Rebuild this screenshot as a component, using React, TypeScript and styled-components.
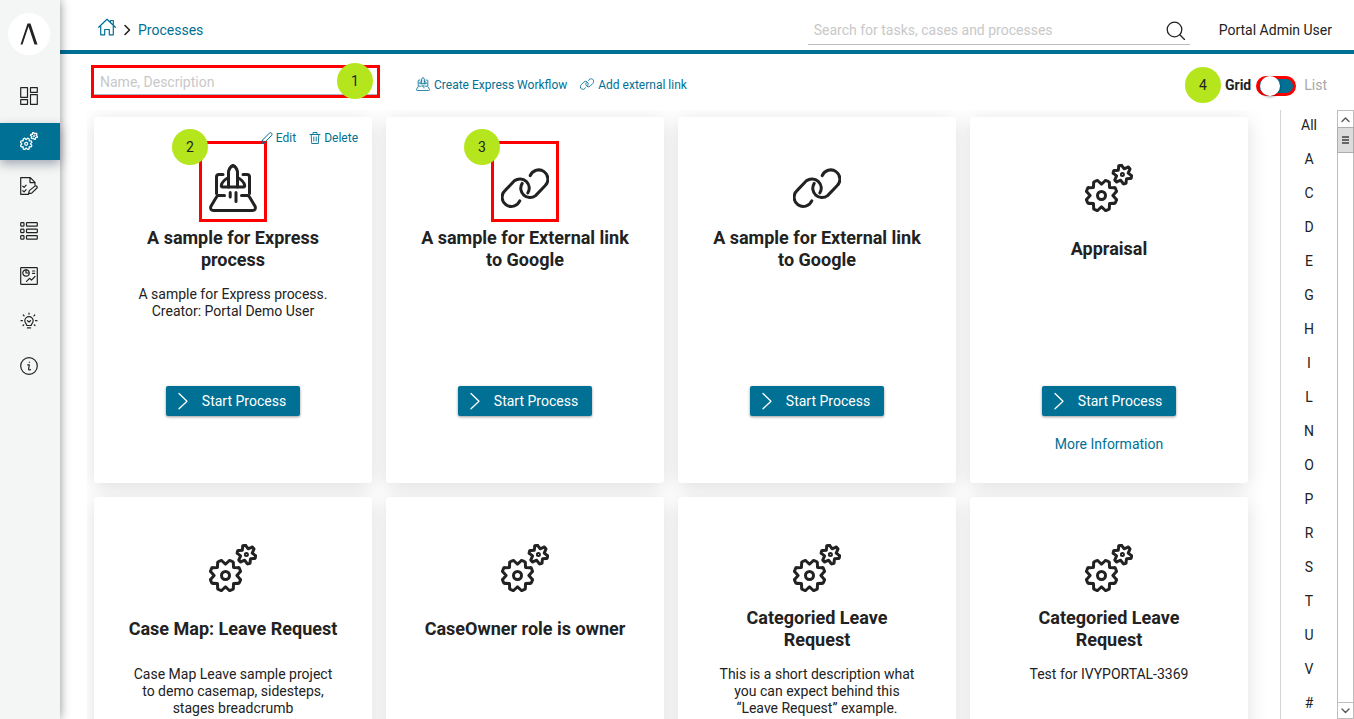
import React from "react";
import styled, { createGlobalStyle, css } from "styled-components";

const teal = "#007095";
const ink = "#222222";

const GlobalStyle = createGlobalStyle`
  *, *::before, *::after { box-sizing: border-box; }
  body { margin: 0; overflow: hidden; background: #fff; color: ${ink}; font: 14px/17px Roboto, "Liberation Sans", sans-serif; }
  button, input { font: inherit; color: inherit; }
  a { color: ${teal}; text-decoration: none; }
  svg { display: block; flex: none; }
`;

/* ---------- icons ---------- */

const Svg = styled.svg<{ $size: number; $stroke: number }>`
  width: ${(p) => p.$size}px;
  height: ${(p) => p.$size}px;
  fill: none;
  stroke: currentColor;
  stroke-width: ${(p) => p.$stroke};
  stroke-linecap: round;
  stroke-linejoin: round;
`;

type IconProps = { size: number; stroke: number };

const gearPath = (
  cx: number,
  cy: number,
  teeth: number,
  tip: number,
  valley: number,
  half: number,
  start: number
) => {
  const at = (r: number, deg: number) => {
    const a = (deg * Math.PI) / 180;
    return `${(cx + r * Math.cos(a)).toFixed(2)} ${(cy + r * Math.sin(a)).toFixed(2)}`;
  };
  const step = 360 / teeth;
  const parts: string[] = [];
  for (let i = 0; i < teeth; i++) {
    const c = start + i * step;
    parts.push(
      `${i ? "L" : "M"}${at(tip - 1, c - half - 2)}Q${at(tip + 0.4, c - half)} ${at(tip, c - half / 3)}`,
      `L${at(tip, c + half / 3)}Q${at(tip + 0.4, c + half)} ${at(tip - 1, c + half + 2)}`,
      `L${at(valley, c + step / 2)}`
    );
  }
  return parts.join("") + "Z";
};

const bigGear = gearPath(16.5, 31.5, 8, 15.6, 11.4, 8, 22.5);
const smallGear = gearPath(37.4, 10.5, 6, 9.4, 6, 10, -104);

const GearsIcon = ({ size, stroke }: IconProps) => (
  <Svg viewBox="0 0 48 48" $size={size} $stroke={stroke} aria-hidden>
    <path d={bigGear} />
    <circle cx="16.5" cy="31.5" r="4" />
    <path d={smallGear} />
    <circle cx="37.4" cy="10.5" r="1" />
  </Svg>
);

const ExpressIcon = ({ size, stroke }: IconProps) => (
  <Svg viewBox="0 0 48 48" $size={size} $stroke={stroke} aria-hidden>
    <path d="M19.5 23V7.5Q20.5 3 24 1.5Q27.5 3 28.5 7.5V23" />
    <path d="M19.5 13.5Q13 17 12.3 21.5Q12.2 23 13.5 23H34.5Q35.8 23 35.7 21.5Q35 17 28.5 13.5" />
    <path d="M14 10.5H10Q7.5 10.5 7.5 13V29.5M34 10.5H38Q40.5 10.5 40.5 13V29.5" />
    <path d="M15.5 31.5H9.5Q8.3 31.5 7.5 33L1.8 42.5Q1 46.5 4.5 46.5H43.5Q47 46.5 46.2 42.5L40.5 33Q39.7 31.5 38.5 31.5H32.5" />
    <path d="M21.2 28.5V33M27 28.5V37.5" />
  </Svg>
);

const LinkIcon = ({ size, stroke }: IconProps) => (
  <Svg viewBox="0 0 48 48" $size={size} $stroke={stroke} aria-hidden>
    <path d="M18.8 36.8A9.2 9.2 0 1 1 4.2 26.4L13.4 16.8A9.2 9.2 0 0 1 26.8 29" />
    <path d="M29.2 11.6A9.2 9.2 0 1 1 43.8 22L34.6 31.6A9.2 9.2 0 0 1 21.2 19.4" />
  </Svg>
);

const DashboardIcon = () => (
  <Svg viewBox="0 0 18 18" $size={18} $stroke={1.2} aria-hidden>
    <path d="M.7.7h6.8v9.6H.7zM10.5.7h6.8v4.6h-6.8zM.7 12.7h6.8v4.6H.7zM10.5 7.7h6.8v9.6h-6.8z" />
  </Svg>
);

const TaskIcon = () => (
  <Svg viewBox="0 0 18 18" $size={18} $stroke={1.2} aria-hidden>
    <path d="M8.5 17.3H.7V.7h9.6L15 5.4V8M10 .9v4.7h4.8M2.8 9.2l1.3 1.2 2-2.2M2.8 13.7l1.3 1.2 2-2.2" />
    <path d="M8.6 16.7l.7-3.1 5.6-4.5q1.2-.7 2 .2.8 1-.2 1.9l-5 4.9z" />
  </Svg>
);

const ListIcon = () => (
  <Svg viewBox="0 0 18 18" $size={18} $stroke={1.2} aria-hidden>
    {[0.7, 7.2, 13.7].map((y) => (
      <g key={y}>
        <rect x=".7" y={y} width="3.3" height="3.5" rx=".8" />
        <rect x="6.5" y={y} width="10.8" height="3.5" rx=".6" />
      </g>
    ))}
  </Svg>
);

const StatsIcon = () => (
  <Svg viewBox="0 0 18 18" $size={18} $stroke={1.2} aria-hidden>
    <rect x=".7" y=".7" width="16.6" height="16.6" rx=".6" />
    <circle cx="6" cy="6" r="3.2" />
    <path d="M6 2.8V6h2.8M12.5 4h2.2M12.5 6.3h2.2M6.5 14.3l3-3 2 1.8 3.5-3.6" />
  </Svg>
);

const BulbIcon = () => (
  <Svg viewBox="0 0 18 18" $size={18} $stroke={1.2} aria-hidden>
    <path d="M6.8 13.5c0-1.5-2-2.3-2-4.7a4.2 4.2 0 0 1 8.4 0c0 2.4-2 3.2-2 4.7zM7.4 15.9h3.2M7.5 8.7L9 10l1.5-1.3" />
    <path d="M9 1v1.2M3.3 3l.8.9M14.7 3l-.8.9M1 8.7h1.4M15.6 8.7H17M3 13.5l.8-.7M15 13.5l-.8-.7" />
  </Svg>
);

const InfoIcon = () => (
  <Svg viewBox="0 0 18 18" $size={18} $stroke={1.2} aria-hidden>
    <circle cx="9" cy="9" r="8.3" />
    <path d="M7.6 7.8H9.3L8.6 12.2Q8.6 13.2 10.5 12.6M9.3 5.2v.1" />
  </Svg>
);

const HomeIcon = () => (
  <Svg viewBox="0 0 18 18" $size={18} $stroke={1.2} aria-hidden>
    <path d="M.7 9.3L9 1.2l8.300 8.100M2.700 8v8.800h4v-5.300h4.600v5.300h4V8M12.500 4V2.500h2.800v4.400" />
  </Svg>
);

const SearchIcon = () => (
  <Svg viewBox="0 0 20 20" $size={20} $stroke={1.3} aria-hidden>
    <circle cx="8.5" cy="9.5" r="7.3" />
    <path d="M13.800 14.800l4.700 4.700" />
  </Svg>
);

const PencilIcon = () => (
  <Svg viewBox="0 0 12 12" $size={12} $stroke={1} aria-hidden>
    <path d="M.6 11.400l.7-3.200L8.600 1q1-.8 2 .2t.2 2L3.700 10.500zM1.300 8.200l2.400 2.300" />
  </Svg>
);

const TrashIcon = () => (
  <Svg viewBox="0 0 12 12" $size={12} $stroke={0.9} aria-hidden>
    <path d="M1 2.500h10M4 2.500v-2h4v2M2.200 2.500l.5 9h6.600l.5-9M4.800 5v4M7.200 5v4" />
  </Svg>
);

const Crumb = () => (
  <Svg viewBox="0 0 8 12" $size={12} $stroke={1.6} aria-hidden>
    <path d="M2 1.500L6.500 6L2 10.500" />
  </Svg>
);

const Arrow = () => (
  <Svg viewBox="0 0 18 18" $size={18} $stroke={1.3} aria-hidden>
    <path d="M5 1.500L13 9.200l-8 7.600" />
  </Svg>
);

const Caret = ({ up }: { up?: boolean }) => (
  <Svg viewBox="0 0 9 9" $size={9} $stroke={1.4} aria-hidden>
    <path d={up ? "M1 6.500L4.500 3L8 6.500" : "M1 3L4.500 6.500L8 3"} />
  </Svg>
);

/* ---------- shell ---------- */

const Shell = styled.div`
  display: grid;
  grid-template-columns: 60px minmax(0, 1fr);
  height: 100vh;
`;

const Sidebar = styled.aside`
  position: relative;
  z-index: 2;
  background: #f4f6f5;
  box-shadow: 0 0 10px rgba(0, 0, 0, 0.45);
  padding-top: 13px;
`;

const Logo = styled.a`
  display: grid;
  place-items: center;
  width: 42px;
  height: 42px;
  margin: 0 0 23px 8px;
  border-radius: 50%;
  background: #fff;
  color: ${ink};
`;

const Nav = styled.nav`
  display: grid;
  gap: 8px;
`;

const NavItem = styled.a<{ $active?: boolean }>`
  display: flex;
  align-items: center;
  height: 37px;
  padding: 0 0 1px 20px;
  color: ${ink};
  ${(p) =>
    p.$active &&
    css`
      background: ${teal};
      color: #fff;
      box-shadow: 0 4px 10px rgba(40, 50, 80, 0.4);
    `}
`;

const Main = styled.main`
  display: flex;
  flex-direction: column;
  min-width: 0;
  min-height: 0;
`;

const Header = styled.header`
  display: flex;
  align-items: flex-end;
  height: 54px;
  padding: 0 22px 5px 38px;
  border-bottom: 4px solid ${teal};
`;

const Breadcrumb = styled.nav`
  display: flex;
  align-items: center;
  gap: 5px;
  height: 30px;
  margin-right: auto;

  a:first-child {
    padding-bottom: 6px;
  }
`;

const SearchBox = styled.form`
  display: flex;
  align-items: center;
  width: 382px;
  height: 30px;
  margin-right: 29px;
  padding: 0 4px 0 6px;
  border-bottom: 1px solid #bcbcbc;
`;

const TextInput = styled.input`
  flex: 1;
  min-width: 0;
  height: 100%;
  padding: 0;
  border: 0;
  outline: 0;
  background: transparent;

  &::placeholder {
    color: #c8c8c8;
    opacity: 1;
  }
`;

const IconButton = styled.button`
  padding: 0;
  border: 0;
  background: none;
`;

const User = styled.span`
  line-height: 30px;
`;

/* ---------- toolbar ---------- */

const Toolbar = styled.div`
  display: flex;
  align-items: flex-start;
  height: 56px;
  padding: 11px 27px 0 31px;
`;

const Badge = styled.span`
  display: grid;
  place-items: center;
  width: 36px;
  height: 36px;
  border-radius: 50%;
  background: #b5e61d;
  color: ${ink};
`;

const FilterBox = styled.div`
  position: relative;
  width: 289px;
  height: 33px;
  margin-right: 36px;
  border: 3px solid #ff0000;

  input {
    width: 100%;
    padding: 2px 6px 0;
    border-bottom: 1px solid #a9b8c4;
  }
  ${Badge} {
    position: absolute;
    top: -5px;
    right: 4px;
  }
`;

const Actions = styled.div`
  display: flex;
  align-items: center;
  gap: 13px;
  height: 40px;
`;

const ActionLink = styled.a`
  display: flex;
  align-items: center;
  gap: 4px;
  font-size: 12px;

  svg {
    margin-bottom: 3px;
  }
`;

const ViewMode = styled.label`
  display: flex;
  align-items: center;
  height: 40px;
  margin-left: auto;
  color: #a8a8a8;

  strong {
    margin: 0 5px 0 4px;
    color: ${ink};
  }
`;

const Switch = styled.input`
  appearance: none;
  display: flex;
  width: 40px;
  height: 20px;
  margin: 2px 8px 0 0;
  border: 3px solid #ff0000;
  border-radius: 10px;
  background: ${teal};

  &::before {
    content: "";
    width: 20px;
    height: 20px;
    margin: -3px 0 0 1px;
    border-radius: 50%;
    background: #fff;
    box-shadow: 0 1px 3px rgba(0, 0, 0, 0.4);
  }
`;

/* ---------- process cards ---------- */

const Body = styled.div`
  display: flex;
  flex: 1;
  min-height: 0;
`;

const Cards = styled.section`
  display: grid;
  flex: 1;
  grid-template-columns: repeat(4, minmax(0, 1fr));
  grid-auto-rows: 366px;
  gap: 14px;
  margin-left: 27px;
  padding: 7px 32px 7px 7px;
  overflow: hidden;
`;

const CardBox = styled.article`
  position: relative;
  display: flex;
  flex-direction: column;
  align-items: center;
  padding: 47px 34px 0;
  border-radius: 4px;
  background: #fff;
  text-align: center;

  /* the shadow sits under every neighbouring card */
  &::before {
    content: "";
    position: absolute;
    inset: 0;
    z-index: -1;
    border-radius: 4px;
    box-shadow: 0 4px 20px rgba(0, 0, 0, 0.13);
  }

  h2 {
    display: flex;
    align-items: center;
    min-height: 44px;
    margin: 15px 0;
    font-size: 18px;
    line-height: 22px;
  }
  p {
    height: 100px;
    margin: 0;
    white-space: pre-line;
  }
`;

const CardTools = styled.div`
  position: absolute;
  top: 13px;
  right: 14px;
  display: flex;
  gap: 13px;

  svg {
    margin-bottom: 2px;
  }
  a {
    gap: 3px;
  }
`;

const IconSlot = styled.div`
  position: relative;
`;

const Marker = styled.div`
  position: absolute;
  top: -23px;
  left: -10px;
  width: 68px;
  height: 81px;
  border: 3px solid #ff0000;

  ${Badge} {
    position: absolute;
    top: -15px;
    left: -30px;
  }
`;

const StartButton = styled.button`
  display: flex;
  align-items: center;
  gap: 10px;
  height: 30px;
  padding: 0 14px 0 8px;
  border: 0;
  border-radius: 2px;
  background: ${teal};
  color: #fff;
  white-space: nowrap;
  box-shadow: 0 1px 3px rgba(0, 0, 0, 0.4);
`;

const MoreLink = styled.a`
  margin-top: 20px;
`;

/* ---------- index & scrollbar ---------- */

const Index = styled.nav`
  display: flex;
  flex-direction: column;
  align-items: center;
  gap: 4px;
  width: 57px;
  border-left: 1px solid #d4d4d4;
  overflow: hidden;

  a {
    flex: none;
    color: ${ink};
    line-height: 30px;
  }
`;

const ScrollTrack = styled.div`
  display: flex;
  flex-direction: column;
  width: 17px;
  border: 1px solid #bdbdbd;
  border-bottom: 0;
  color: #555;
`;

const ScrollButton = styled.button<{ $last?: boolean }>`
  display: grid;
  place-items: center;
  height: 17px;
  padding: 0;
  border: 0;
  background: #fff;
  ${(p) =>
    p.$last
      ? css`
          margin-top: auto;
          border-top: 1px solid #bdbdbd;
          border-bottom: 1px solid #bdbdbd;
        `
      : css`
          border-bottom: 1px solid #bdbdbd;
        `}
`;

const ScrollThumb = styled.div`
  display: grid;
  place-content: center;
  gap: 1px;
  height: 26px;
  margin: -1px -1px 0;
  border: 1px solid #adadad;
  background: #dcdcdc;

  i {
    width: 7px;
    height: 2px;
    background: #666;
  }
`;

const navItems = [
  { label: "Dashboard", icon: <DashboardIcon /> },
  { label: "Processes", icon: <GearsIcon size={18} stroke={3.4} />, active: true },
  { label: "Tasks", icon: <TaskIcon /> },
  { label: "Cases", icon: <ListIcon /> },
  { label: "Statistics", icon: <StatsIcon /> },
  { label: "Ideas", icon: <BulbIcon /> },
  { label: "About", icon: <InfoIcon /> },
];

type Process = {
  title: string;
  text?: string;
  icon: React.FC<IconProps>;
  mark?: string;
  editable?: boolean;
  startable?: boolean;
  more?: boolean;
};

const processes: Process[] = [
  {
    title: "A sample for Express process",
    text: "A sample for Express process.\nCreator: Portal Demo User",
    icon: ExpressIcon,
    mark: "2",
    editable: true,
    startable: true,
  },
  {
    title: "A sample for External link to Google",
    icon: LinkIcon,
    mark: "3",
    startable: true,
  },
  { title: "A sample for External link to Google", icon: LinkIcon, startable: true },
  { title: "Appraisal", icon: GearsIcon, startable: true, more: true },
  {
    title: "Case Map: Leave Request",
    text: "Case Map Leave sample project to demo casemap, sidesteps, stages breadcrumb",
    icon: GearsIcon,
  },
  { title: "CaseOwner role is owner", icon: GearsIcon },
  {
    title: "Categoried Leave Request",
    text: "This is a short description what you can expect behind this “Leave Request” example.",
    icon: GearsIcon,
  },
  { title: "Categoried Leave Request", text: "Test for IVYPORTAL-3369", icon: GearsIcon },
];

const ProcessCard = ({ title, text, icon: Icon, mark, editable, startable, more }: Process) => (
  <CardBox>
    <IconSlot>
      <Icon size={48} stroke={3} />
      {mark && (
        <Marker>
          <Badge>{mark}</Badge>
        </Marker>
      )}
    </IconSlot>
    {editable && (
      <CardTools>
        <ActionLink href="#edit">
          <PencilIcon />
          Edit
        </ActionLink>
        <ActionLink href="#delete">
          <TrashIcon />
          Delete
        </ActionLink>
      </CardTools>
    )}
    <h2>{title}</h2>
    <p>{text}</p>
    {startable && (
      <StartButton type="button">
        <Arrow />
        Start Process
      </StartButton>
    )}
    {more && <MoreLink href="#more">More Information</MoreLink>}
  </CardBox>
);

const letters = ["All", ..."ACDEGHILNOPRSTUV#"];

export default function App() {
  return (
    <>
      <GlobalStyle />
      <Shell>
        <Sidebar>
          <Logo href="#home" aria-label="Home">
            <svg width="18" height="22" viewBox="0 0 18 22" aria-hidden>
              <path d="M.5 21.500L7.500.5h3l7 21h-3L8.500 3.500L2.500 21.500z" fill="currentColor" />
            </svg>
          </Logo>
          <Nav>
            {navItems.map((n) => (
              <NavItem key={n.label} href="#nav" aria-label={n.label} $active={n.active}>
                {n.icon}
              </NavItem>
            ))}
          </Nav>
        </Sidebar>
        <Main>
          <Header>
            <Breadcrumb>
              <a href="#home" aria-label="Home">
                <HomeIcon />
              </a>
              <Crumb />
              <a href="#processes">Processes</a>
            </Breadcrumb>
            <SearchBox>
              <TextInput
                aria-label="Search"
                placeholder="Search for tasks, cases and processes"
              />
              <IconButton type="button" aria-label="Search">
                <SearchIcon />
              </IconButton>
            </SearchBox>
            <User>Portal Admin User</User>
          </Header>
          <Toolbar>
            <FilterBox>
              <TextInput aria-label="Filter" placeholder="Name, Description" />
              <Badge>1</Badge>
            </FilterBox>
            <Actions>
              <ActionLink href="#express">
                <ExpressIcon size={14} stroke={3} />
                Create Express Workflow
              </ActionLink>
              <ActionLink href="#external">
                <LinkIcon size={14} stroke={3} />
                Add external link
              </ActionLink>
            </Actions>
            <ViewMode>
              <Badge>4</Badge>
              <strong>Grid</strong>
              <Switch type="checkbox" role="switch" />
              List
            </ViewMode>
          </Toolbar>
          <Body>
            <Cards>
              {processes.map((p, i) => (
                <ProcessCard key={i} {...p} />
              ))}
            </Cards>
            <Index>
              {letters.map((l) => (
                <a key={l} href="#filter">
                  {l}
                </a>
              ))}
            </Index>
            <ScrollTrack>
              <ScrollButton type="button" aria-label="Scroll up">
                <Caret up />
              </ScrollButton>
              <ScrollThumb>
                <i />
                <i />
                <i />
              </ScrollThumb>
              <ScrollButton type="button" aria-label="Scroll down" $last>
                <Caret />
              </ScrollButton>
            </ScrollTrack>
          </Body>
        </Main>
      </Shell>
    </>
  );
}
